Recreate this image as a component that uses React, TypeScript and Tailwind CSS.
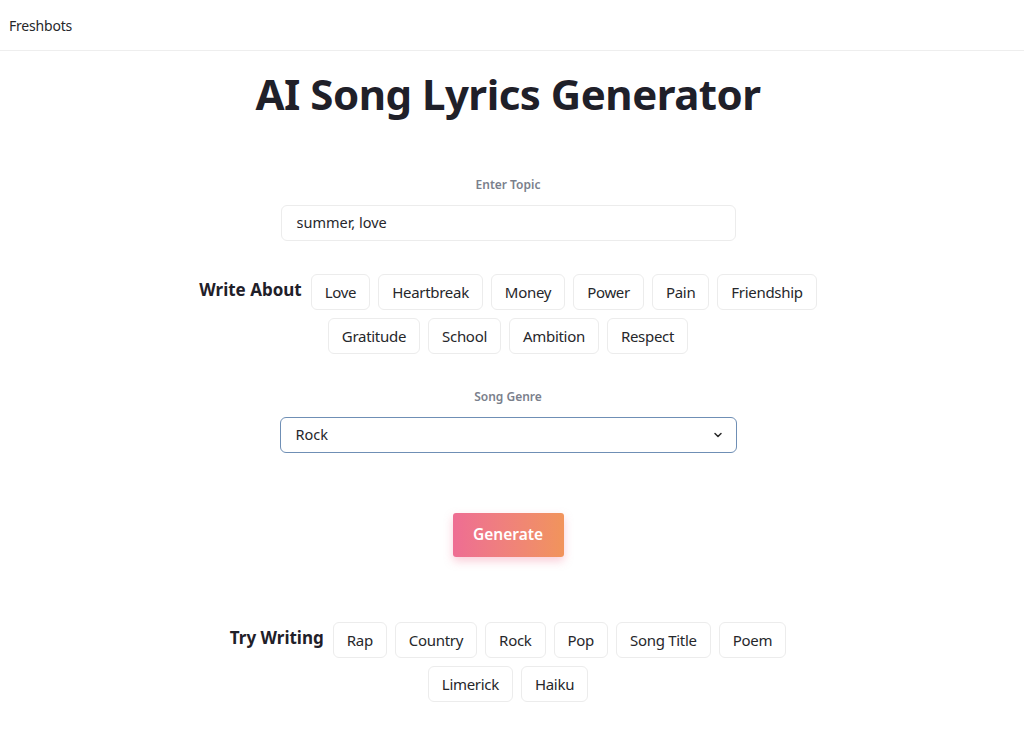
import React from "react";

const topics1 = ["Love", "Heartbreak", "Money", "Power", "Pain", "Friendship"];
const topics2 = ["Gratitude", "School", "Ambition", "Respect"];
const kinds1 = ["Rap", "Country", "Rock", "Pop", "Song Title", "Poem"];
const kinds2 = ["Limerick", "Haiku"];

function Chip({ label }: { label: string }) {
  return (
    <button className="h-9 px-[13px] rounded-md border border-[#ececec] bg-white text-[15px] tracking-[-0.3px] text-[#26272b] leading-none">
      {label}
    </button>
  );
}

function ChipGroup({ title, rows }: { title: string; rows: string[][] }) {
  return (
    <div className="flex flex-col items-center gap-2">
      {rows.map((row, i) => (
        <div key={i} className="flex items-start justify-center gap-2">
          {i === 0 && (
            <span className="text-[17px] font-bold leading-[32px] text-[#1f2029] mr-[1px]">{title}</span>
          )}
          {row.map((t) => (
            <Chip key={t} label={t} />
          ))}
        </div>
      ))}
    </div>
  );
}

export default function App() {
  return (
    <div className="min-h-[742px] bg-white" style={{ fontFamily: '"Noto Sans", "Open Sans", sans-serif' }}>
      <header className="h-[51px] border-b border-[#eeeeee] flex items-center px-[9px]">
        <span className="text-[14px] tracking-[-0.2px] text-[#26272b]">Freshbots</span>
      </header>
      <main className="flex flex-col items-center pr-[8px]">
        <h1 className="mt-[15px] text-[42px] font-bold leading-[56px] text-[#1f2029] tracking-[-0.5px]">AI Song Lyrics Generator</h1>
        <label className="mt-[55px] text-[12px] font-semibold leading-4 text-[#7a808c]">Enter Topic</label>
        <div className="mt-3 w-[455px] h-9 rounded-md border border-[#ececec] flex items-center px-[15px] text-[14.5px] text-[#26272b]">
          summer, love
        </div>
        <div className="mt-[33px]">
          <ChipGroup title="Write About" rows={[topics1, topics2]} />
        </div>
        <label className="mt-[35px] text-[12px] font-semibold leading-4 text-[#7a808c]">Song Genre</label>
        <div className="mt-3 w-[457px] h-9 rounded-md border-[1.5px] border-[#6f8fb5] flex items-center justify-between pl-[15px] pr-[13px] text-[14.5px] text-[#26272b]">
          <span>Rock</span>
          <svg width="10" height="10" viewBox="0 0 10 10" fill="none">
            <path d="M2 3.5 L5 6.5 L8 3.5" stroke="#2a2a2a" strokeWidth="1.5" strokeLinecap="round" strokeLinejoin="round" />
          </svg>
        </div>
        <button className="mt-[60px] w-[111px] h-[44px] rounded-[3px] bg-gradient-to-r from-[#ee6d93] to-[#f1945b] text-white text-[15.5px] font-semibold shadow-[0_4px_10px_rgba(240,110,140,0.35)]">
          Generate
        </button>
        <div className="mt-[65px]">
          <ChipGroup title="Try Writing" rows={[kinds1, kinds2]} />
        </div>
      </main>
    </div>
  );
}
